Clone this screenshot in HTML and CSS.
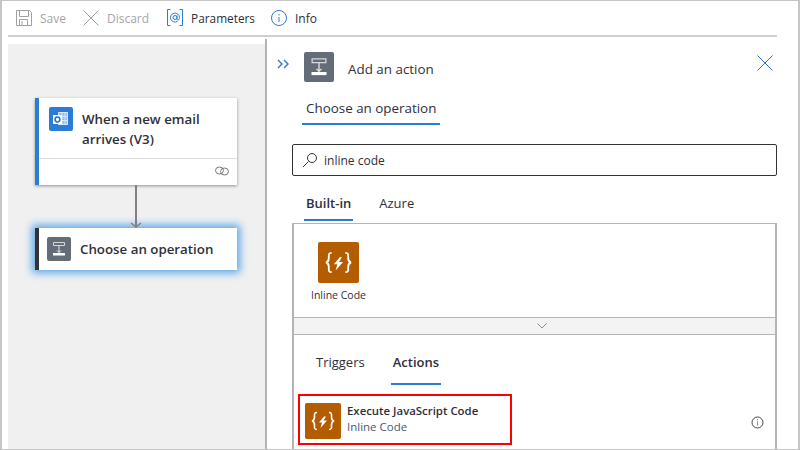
FILE: index.html
```html
<!DOCTYPE html>
<html lang="en">
<head>
    <meta charset="UTF-8">
    <title>Add an action</title>
    <link rel="stylesheet" href="styles.css">
</head>
<body>
    <div class="frame">
        <div class="toolbar">
            <div class="tool off">
                <svg width="16" height="16" viewBox="0 0 16 16" fill="none" stroke="#a0a0a0"><path d="M.5.5h13l2 2v13H.5z"/><path d="M3.5.5v6h9v-6"/><path d="M3.5 15.500v-6h8v6M6 11v4.500"/></svg>
                <span>Save</span>
            </div>
            <div class="tool off">
                <svg width="16" height="16" viewBox="0 0 16 16" fill="none" stroke="#a0a0a0"><path d="M.5.500l15 15M15.500.500l-15 15"/></svg>
                <span>Discard</span>
            </div>
            <div class="tool params">
                <svg width="16" height="18" viewBox="0 0 16 18" fill="none" stroke="#2b7cd3"><path d="M3.500.500h-3v16h3M12.500.500h3v16h-3"/><circle cx="8" cy="8.500" r="2"/><path d="M10 6.500v3.500c0 1.500 2.500 1.500 2.500-1.500a4.500 4.500 0 1 0-2 3.800"/></svg>
                <span>Parameters</span>
            </div>
            <div class="tool info">
                <svg width="16" height="16" viewBox="0 0 16 16" fill="none" stroke="#2b7cd3"><circle cx="8" cy="8" r="7.500"/><path d="M8 7v5M8 4v1.500"/></svg>
                <span>Info</span>
            </div>
        </div>
        <div class="main">
            <!-- designer -->
            <div class="canvas">
                <div class="card trigger">
                    <div class="card-top">
                        <div class="card-icon blue">
                            <svg width="24" height="24" viewBox="0 0 24 24"><path d="M9 5h10v13H9z" fill="#8fc0f0"/><path d="M9.500 5.500h9v12h-9zM13 5.500v12M16 5.500v12M9.500 9.500h9M9.500 13.500h9" fill="none" stroke="#d8e9fa"/><path d="M4 8h9v9H4z" fill="#fff"/><circle cx="8.500" cy="12.500" r="2.400" fill="none" stroke="#1f6fc4" stroke-width="1.500"/></svg>
                        </div>
                        <div class="card-title">When a new email arrives (V3)</div>
                    </div>
                    <div class="card-foot">
                        <svg width="14" height="10" viewBox="0 0 14 10" fill="none" stroke="#777"><ellipse cx="4.500" cy="4.500" rx="4" ry="3.500"/><ellipse cx="9.500" cy="5.500" rx="4" ry="3.500"/></svg>
                    </div>
                </div>
                <svg class="arrow" width="14" height="43" viewBox="0 0 14 43" fill="none" stroke="#808080"><path d="M7 0v42" stroke-width="2"/><path d="M2 38l5 4 5-4" stroke-width="1.500"/></svg>
                <div class="card picked">
                    <div class="card-icon slate">
                        <svg width="24" height="24" viewBox="0 0 24 24"><use href="#op"/></svg>
                    </div>
                    <div class="card-title">Choose an operation</div>
                </div>
            </div>

            <!-- side panel -->
            <div class="panel">
                <div class="panel-head">
                    <svg class="collapse" width="12" height="10" viewBox="0 0 12 10" fill="none" stroke="#2b6fd3" stroke-width="1.300"><path d="M1 1l4 4-4 4M7 1l4 4-4 4"/></svg>
                    <div class="head-icon">
                        <svg width="30" height="30" viewBox="0 0 24 24"><g id="op"><path d="M6.500 5.500h11v3h-11z" fill="none" stroke="#d5d8dc"/><path d="M12 8.500v7M10 13.500l2 2 2-2" fill="none" stroke="#e6e8ea"/><path d="M6 16h12v2.500H6z" fill="#fff"/></g></svg>
                    </div>
                    <div class="head-title">Add an action</div>
                    <svg class="close" width="16" height="16" viewBox="0 0 16 16" fill="none" stroke="#2b6fd3"><path d="M.5.500l15 15M15.500.500l-15 15"/></svg>
                </div>
                <div class="op-tab"><span>Choose an operation</span></div>
                <div class="search">
                    <svg width="16" height="16" viewBox="0 0 16 16" fill="none" stroke="#333"><circle cx="10" cy="6" r="4.500"/><path d="M6.500 9.500l-5.500 5.500"/></svg>
                    <span>inline code</span>
                </div>
                <div class="tabs top-tabs">
                    <div class="tab on">Built-in</div>
                    <div class="tab">Azure</div>
                </div>
                <div class="results">
                    <div class="connectors">
                        <div class="connector">
                            <div class="code-icon big">
                                <svg width="41" height="41" viewBox="0 0 36 36"><use href="#braces"/></svg>
                            </div>
                            <div class="connector-name">Inline Code</div>
                        </div>
                    </div>
                    <div class="expander">
                        <svg width="10" height="6" viewBox="0 0 10 6" fill="none" stroke="#9a8a7c"><path d="M.5.500l4.500 4.500 4.500-4.500"/></svg>
                    </div>
                    <div class="tabs low-tabs">
                        <div class="tab">Triggers</div>
                        <div class="tab on">Actions</div>
                    </div>
                    <div class="action">
                        <div class="code-icon">
                            <svg width="36" height="36" viewBox="0 0 36 36"><g id="braces" fill="none" stroke="#fff" stroke-width="1.600"><path d="M12 9.500c-3 0-2.500 2-2.500 4.500s-.5 3.500-2.500 4c2 .5 2.500 1.500 2.500 4s-.5 4.500 2.500 4.500"/><path d="M24 9.500c3 0 2.500 2 2.500 4.500s.5 3.500 2.500 4c-2 .5-2.500 1.500-2.500 4s.5 4.500-2.500 4.500"/><path d="M19 13.500l-5 6h3l-1.500 5.500 6.500-7.500h-3.500l2.500-4z" fill="#fff" stroke="none"/></g></svg>
                        </div>
                        <div class="action-text">
                            <div class="action-name">Execute JavaScript Code</div>
                            <div class="action-sub">Inline Code</div>
                        </div>
                    </div>
                    <svg class="action-info" width="13" height="13" viewBox="0 0 13 13" fill="none" stroke="#444"><circle cx="6.500" cy="6.500" r="5.500"/><path d="M6.500 5.500v4M6.500 3v1.300" stroke="#c08a2a"/></svg>
                </div>
            </div>
        </div>
    </div>
</body>
</html>
```

FILE: styles.css
```css
*{
    margin:0;
    padding:0;
    box-sizing:border-box;
}
body{
    font-family:"Open Sans","Noto Sans",sans-serif;
    color:#2f2f3a;
    background:#fff;
}
svg{
    display:block;
    flex:none;
}
.frame{
    width:800px;
    height:450px;
    border:2px solid #c6c6c6;
    border-bottom-width:1px;
    border-top-width:1px;
    display:flex;
    flex-direction:column;
    overflow:hidden;
}

/* toolbar */
.toolbar{
    height:36px;
    margin:0 21px 0 6px;
    padding-left:8px;
    border-bottom:2px solid #d0d0d0;
    display:flex;
    align-items:center;
    gap:17px;
}
.tool{
    display:flex;
    align-items:center;
    gap:8px;
    font-size:12px;
}
.tool.off{
    color:#a6a6a6;
}
.params{
    margin-left:1px;
    font-size:11.8px;
}
.info{
    margin-left:-1px;
}

.main{
    flex:1;
    display:flex;
    min-height:0;
}

/* designer */
.canvas{
    width:257px;
    margin:7px 0 0 6px;
    padding:54px 0 0 27px;
    background:#f0f0f0;
}
.card{
    width:202px;
    background:#fff;
    box-shadow:0 1px 3px rgba(0,0,0,.4);
}
.trigger{
    height:87px;
    border-left:4px solid #2b7cd3;
}
.trigger .card-title{
    padding-top:2px;
}
.card-top{
    height:61px;
    padding:9px 0 0 10px;
    display:flex;
    gap:9px;
    border-bottom:1px solid #dedede;
}
.card-icon{
    width:24px;
    height:24px;
    border-radius:2px;
}
.blue{
    background:#2b7cd9;
}
.slate{
    background:#646c78;
}
.card-title{
    font-size:13.3px;
    font-weight:600;
    line-height:20px;
}
.card-foot{
    display:flex;
    justify-content:flex-end;
    padding:7px 8px 0 0;
}
.arrow{
    margin-left:94px;
}
.picked{
    height:42px;
    border-left:4px solid #333;
    padding-left:8px;
    display:flex;
    align-items:center;
    gap:9px;
    box-shadow:0 0 8px 3px #5aa6ea;
}

/* side panel */
.panel{
    flex:1;
    margin-top:2px;
    border-left:2px solid #b4b4b4;
    display:flex;
    flex-direction:column;
    min-width:0;
}
.panel-head{
    display:flex;
    align-items:center;
    margin-top:13px;
    padding:0 25px 0 10px;
    height:30px;
}
.collapse{
    margin:-6px 15px 0 0;
}
.head-icon{
    width:30px;
    height:30px;
    border-radius:2px;
    background:#646c78;
}
.head-title{
    flex:1;
    margin-left:14px;
    padding-top:4px;
    font-size:13.4px;
}
.close{
    margin-top:-9px;
}
.op-tab{
    margin:16px 0 0 35px;
    display:flex;
}
.op-tab span{
    font-size:13.4px;
    line-height:20px;
    padding:0 4px 5px;
    border-bottom:2px solid #2b7cd3;
}
.search{
    width:485px;
    height:32px;
    margin:19px 0 0 25px;
    padding-left:9px;
    border:1px solid #333;
    border-radius:2px;
    display:flex;
    align-items:center;
    gap:6px;
    font-size:12px;
}
.tabs{
    display:flex;
    font-size:13px;
}
.tab{
    line-height:20px;
    padding:0 2px 6px;
    border-bottom:2px solid transparent;
}
.tab.on{
    font-weight:600;
    border-bottom-color:#2b7cd3;
}
.top-tabs{
    margin:17px 0 0 37px;
    gap:24px;
}
.results{
    flex:1;
    margin:2px 21px 0 25px;
    border:solid #b4b4b4;
    border-width:1px 2px 0 2px;
    position:relative;
}
.connectors{
    height:93px;
    padding:18px 0 0 15px;
    display:flex;
}
.connector{
    width:59px;
    display:flex;
    flex-direction:column;
    align-items:center;
}
.code-icon{
    background:#b35c00;
    border-radius:2px;
    width:36px;
    height:36px;
}
.code-icon.big{
    width:41px;
    height:41px;
}
.connector-name{
    margin-top:5px;
    font-size:10.5px;
    line-height:14px;
    white-space:nowrap;
}
.expander{
    height:18px;
    padding-left:14px;
    background:#f3f3f3;
    border:solid #b4b4b4;
    border-width:1px 0;
    display:flex;
    align-items:center;
    justify-content:center;
}
.low-tabs{
    margin:17px 0 0 20px;
    gap:24px;
}
.low-tabs .tab{
    padding-bottom:11px;
}
.action{
    width:214px;
    height:51px;
    margin:9px 0 0 4px;
    padding:3px 0 0 5px;
    border:2px solid #f00;
    display:flex;
    align-items:center;
    gap:6px;
}
.action-text{
    margin-top:-4px;
}
.action-name{
    font-size:11.4px;
    font-weight:600;
    line-height:16px;
}
.action-sub{
    font-size:11.5px;
    line-height:16px;
    color:#4a5a6e;
}
/* sits over the row */
.action-info{
    position:absolute;
    right:11px;
    top:192px;
}
```
